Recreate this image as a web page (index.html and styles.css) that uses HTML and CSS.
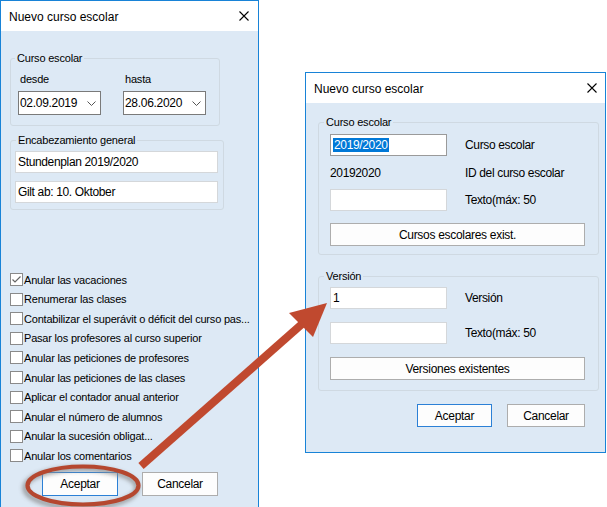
FILE: index.html
```html
<!DOCTYPE html>
<html>
<head>
<meta charset="utf-8">
<link rel="stylesheet" href="styles.css">
</head>
<body>
<div class="desk">
  <div class="win win-left">
    <div class="titlebar">
      <span class="title">Nuevo curso escolar</span>
      <svg class="close" width="10" height="10" viewBox="0 0 10 10"><path d="M0.5 0.5 L9.5 9.5 M9.5 0.5 L0.5 9.5" stroke="#000" stroke-width="1.1"/></svg>
    </div>
    <div class="body body-left">
      <fieldset class="grp grp-year">
        <legend>Curso escolar</legend>
        <div class="dates">
          <div class="datecol">
            <div class="lbl">desde</div>
            <div class="combo"><span>02.09.2019</span><svg class="chev" width="9" height="5" viewBox="0 0 9 5"><path d="M0.5 0.5 L4.5 4.5 L8.5 0.5" fill="none" stroke="#555" stroke-width="1"/></svg></div>
          </div>
          <div class="datecol">
            <div class="lbl">hasta</div>
            <div class="combo"><span>28.06.2020</span><svg class="chev" width="9" height="5" viewBox="0 0 9 5"><path d="M0.5 0.5 L4.5 4.5 L8.5 0.5" fill="none" stroke="#555" stroke-width="1"/></svg></div>
          </div>
        </div>
      </fieldset>
      <fieldset class="grp grp-head">
        <legend>Encabezamiento general</legend>
        <div class="tb tb-wide">Stundenplan 2019/2020</div>
        <div class="tb tb-wide tb-gap">Gilt ab: 10. Oktober</div>
      </fieldset>
      <ul class="checks">
        <li><span class="cb"><svg width="11" height="11" viewBox="0 0 11 11"><path d="M1.5 5.5 L4 8 L9.5 2.5" fill="none" stroke="#666" stroke-width="1.2"/></svg></span>Anular las vacaciones</li>
        <li><span class="cb"></span>Renumerar las clases</li>
        <li><span class="cb"></span>Contabilizar el superávit o déficit del curso pas...</li>
        <li><span class="cb"></span>Pasar los profesores al curso superior</li>
        <li><span class="cb"></span>Anular las peticiones de profesores</li>
        <li><span class="cb"></span>Anular las peticiones de las clases</li>
        <li><span class="cb"></span>Aplicar el contador anual anterior</li>
        <li><span class="cb"></span>Anular el número de alumnos</li>
        <li><span class="cb"></span>Anular la sucesión obligat...</li>
        <li><span class="cb"></span>Anular los comentarios</li>
      </ul>
      <div class="btns btns-left">
        <div class="btn btn-default btn-l">Aceptar</div>
        <div class="btn btn-l">Cancelar</div>
      </div>
    </div>
  </div>

  <div class="win win-right">
    <div class="titlebar">
      <span class="title">Nuevo curso escolar</span>
      <svg class="close" width="10" height="10" viewBox="0 0 10 10"><path d="M0.5 0.5 L9.5 9.5 M9.5 0.5 L0.5 9.5" stroke="#000" stroke-width="1.1"/></svg>
    </div>
    <div class="body body-right">
      <fieldset class="grp grp-r1">
        <legend>Curso escolar</legend>
        <div class="form form-r1">
          <div class="tb tb-sm tb-focus"><span class="sel">2019/2020</span></div>
          <div class="flbl">Curso escolar</div>
          <div class="plain">20192020</div>
          <div class="flbl">ID del curso escolar</div>
          <div class="tb tb-sm"></div>
          <div class="flbl">Texto(máx: 50</div>
        </div>
        <div class="btn btn-wide">Cursos escolares exist.</div>
      </fieldset>
      <fieldset class="grp grp-r2">
        <legend>Versión</legend>
        <div class="form form-r2">
          <div class="tb tb-sm">1</div>
          <div class="flbl">Versión</div>
          <div class="tb tb-sm"></div>
          <div class="flbl">Texto(máx: 50</div>
        </div>
        <div class="btn btn-wide btn-wide2">Versiones existentes</div>
      </fieldset>
      <div class="btns btns-right">
        <div class="btn btn-default btn-r1">Aceptar</div>
        <div class="btn btn-r2">Cancelar</div>
      </div>
    </div>
  </div>

  <svg class="overlay" width="607" height="507" viewBox="0 0 607 507">
    <defs>
      <filter id="sh" x="-20%" y="-40%" width="140%" height="180%">
        <feGaussianBlur stdDeviation="2.2"/>
      </filter>
    </defs>
    <ellipse cx="81" cy="488" rx="56" ry="19.5" fill="none" stroke="#8a8a8a" stroke-width="5" filter="url(#sh)" opacity="0.8"/>
    <ellipse cx="83" cy="485.5" rx="55.5" ry="19" fill="none" stroke="#b5472f" stroke-width="4.2"/>
    <line x1="141" y1="466" x2="302" y2="324" stroke="#c0492f" stroke-width="8"/>
    <polygon points="327,303 289,313 313,337" fill="#c0492f"/>
  </svg>
</div>
</body>
</html>
```

FILE: styles.css
```css
html, body {
  margin: 0;
  padding: 0;
  background: #ffffff;
}
.desk {
  position: relative;
  width: 607px;
  height: 507px;
  overflow: hidden;
  font-family: "Liberation Sans", Arial, sans-serif;
  font-size: 11px;
  letter-spacing: -0.2px;
  color: #000;
}
.win {
  position: absolute;
  border: 1px solid #1883d7;
  background: #dde9f5;
  box-sizing: border-box;
}
.win-left {
  left: 0;
  top: 0;
  width: 259px;
  height: 507px;
  border-bottom: none;
}
.win-right {
  left: 305px;
  top: 72px;
  width: 301px;
  height: 381px;
}
.titlebar {
  height: 30px;
  background: #ffffff;
  display: flex;
  align-items: center;
  justify-content: space-between;
  padding: 0 9px 0 8px;
}
.win-right .titlebar {
  padding: 0 8px 0 8px;
}
.title {
  font-size: 12px;
  letter-spacing: 0;
  line-height: 14px;
  padding-top: 1px;
}
.close {
  display: block;
}
.body-left {
  padding-left: 9px;
  padding-top: 20px;
}
.grp {
  margin: 0;
  padding: 0;
  border: 1px solid #cfd9e2;
  border-radius: 3px;
  min-width: 0;
}
.grp legend {
  padding: 0 2px;
  line-height: 14px;
}
.grp-year {
  width: 210px;
  box-sizing: border-box;
  padding: 0 0 10px 7px;
}
.grp-year legend {
  margin-left: -3px;
}
.dates {
  display: flex;
  gap: 22px;
  margin-top: 7px;
}
.lbl {
  line-height: 14px;
  padding-left: 2px;
  margin-bottom: 5px;
}
.combo {
  width: 83px;
  height: 24px;
  box-sizing: border-box;
  border: 1px solid #7a7a7a;
  background: #fff;
  display: flex;
  align-items: center;
  justify-content: space-between;
  padding: 0 4px 0 1px;
  font-size: 12px;
  letter-spacing: -0.3px;
}
.chev {
  display: block;
  margin-top: 1px;
}
.grp-head {
  width: 214px;
  box-sizing: border-box;
  margin-top: 7px;
  padding: 0 0 6px 4px;
}
.grp-head legend {
  margin-left: 1px;
}
.tb {
  height: 22px;
  box-sizing: border-box;
  border: 1px solid #d4d7da;
  background: #fff;
  display: flex;
  align-items: center;
  padding-left: 2px;
  font-size: 12px;
  letter-spacing: -0.35px;
}
.tb-wide {
  width: 203px;
  margin-top: 4px;
}
.tb-gap {
  margin-top: 8px;
}
.checks {
  list-style: none;
  margin: 60px 0 0 0;
  padding: 0;
}
.checks li {
  height: 19.56px;
  display: flex;
  align-items: center;
  white-space: nowrap;
}
.cb {
  width: 13px;
  height: 13px;
  box-sizing: border-box;
  border: 1px solid #8a8a8a;
  background: #fff;
  margin-right: 1px;
  display: flex;
  align-items: center;
  justify-content: center;
  flex: none;
}
.cb svg {
  display: block;
}
.btns {
  display: flex;
}
.btns-left {
  margin-top: 7px;
  padding-left: 32px;
  gap: 24px;
}
.btn {
  box-sizing: border-box;
  border: 1px solid #adadad;
  background: #fdfdfd;
  display: flex;
  align-items: center;
  justify-content: center;
  font-size: 12px;
  letter-spacing: -0.3px;
}
.btn-default {
  border-color: #2b80d6;
}
.btn-l {
  width: 76px;
  height: 24px;
}
.body-right {
  padding-left: 12px;
  padding-top: 12px;
}
.grp-r1, .grp-r2 {
  width: 281px;
  box-sizing: border-box;
  padding: 0 0 8px 11px;
}
.grp-r1 legend, .grp-r2 legend {
  margin-left: -6px;
}
.grp-r2 {
  margin-top: 14px;
  padding-bottom: 10px;
}
.form {
  display: grid;
  grid-template-columns: 117px auto;
  column-gap: 18px;
  align-items: center;
}
.form-r1 {
  margin-top: 5px;
  grid-template-rows: 22px 33px 22px;
}
.form-r2 {
  margin-top: 4px;
  grid-template-rows: 22px 22px;
  row-gap: 13px;
}
.tb-sm {
  width: 117px;
  padding-left: 2px;
}
.tb-focus {
  border-color: #9a9a9a;
}
.sel {
  background: #0078d7;
  color: #fff;
  line-height: 14px;
  padding: 0 1px;
}
.flbl {
  font-size: 12px;
  letter-spacing: -0.35px;
  line-height: 14px;
}
.plain {
  font-size: 12px;
  letter-spacing: -0.35px;
  padding-left: 0;
  line-height: 14px;
}
.btn-wide {
  width: 255px;
  height: 23px;
  margin-top: 12px;
}
.btn-wide2 {
  margin-top: 13px;
}
.btns-right {
  margin-top: 13px;
  padding-left: 99px;
  gap: 15px;
}
.btn-r1 {
  width: 75px;
  height: 23px;
}
.btn-r2 {
  width: 78px;
  height: 23px;
}
.overlay {
  position: absolute;
  left: 0;
  top: 0;
  pointer-events: none;
}
```
